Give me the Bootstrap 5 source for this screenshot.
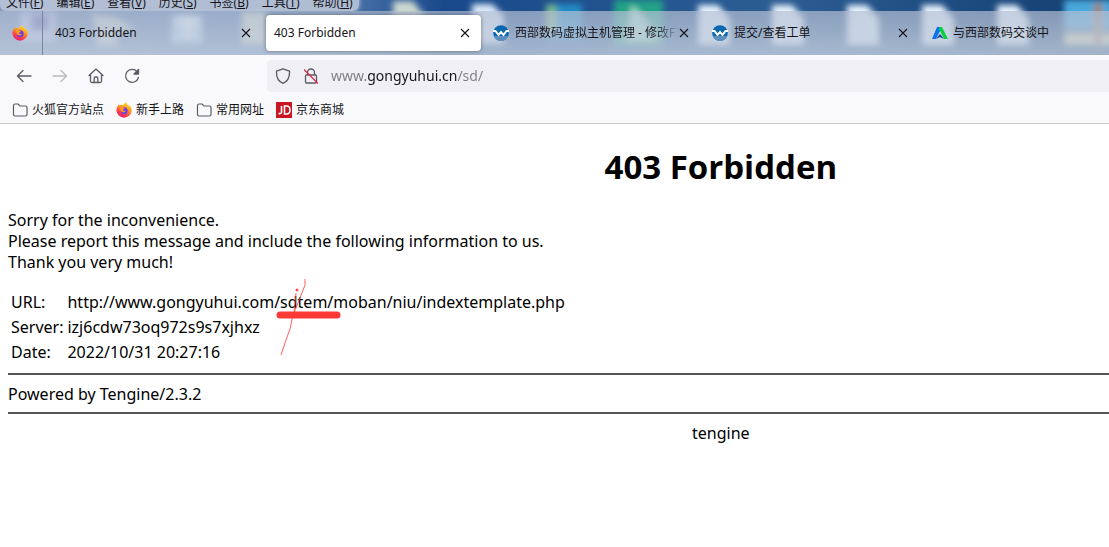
<!DOCTYPE html>
<html lang="zh-CN">
<head>
<meta charset="utf-8">
<meta name="viewport" content="width=device-width, initial-scale=1">
<title>403 Forbidden</title>
<link href="https://cdn.jsdelivr.net/npm/bootstrap@5.3.0/dist/css/bootstrap.min.css" rel="stylesheet">
<style>
body{font-family:"Noto Sans","Noto Sans CJK SC",sans-serif;font-size:16px;line-height:21px;color:#000}
.chrome{font-size:12px;line-height:16px}
.chrome a,.chrome button{color:#15141a;text-decoration:none}
.chrome button{border:0;background:none;padding:0;line-height:16px;flex:none;white-space:nowrap}
.window-top{background:#1c4b88;overflow:hidden}
.wallpaper{position:absolute;inset:0;width:100%;height:100%}
.menubar{height:11px;overflow:hidden}
.menu-glow{background:#bcc6d8e0;border-radius:0 0 6px 6px;gap:13px;padding:0 6px;box-shadow:0 0 5px #bcc6d8}
.tabstrip{height:44px;background:linear-gradient(#b4bfd3b0,#c4cfded0);overflow:hidden}
.pin{width:43px;border-right:1px solid #7785a0;padding-left:12px;flex:none}
.tab-item{width:215px;height:36px;margin:0 2px;padding:0 11px 0 8px;flex:none;border-radius:4px}
.tab-item.current{background:#fff;box-shadow:0 0 4px #0006}
.tab-label{flex:1;overflow:hidden;white-space:nowrap}
.fade-end{-webkit-mask:linear-gradient(90deg,#000 85%,#0000);mask:linear-gradient(90deg,#000 85%,#0000)}
.toolbar{background:#f9f9fb;height:41px;padding-left:16px}
.nav-tools{width:251px;gap:20px;flex:none}
.nav-tools svg,.urlbox svg{display:block;fill:none;stroke:#5b5b66;stroke-width:1.3;stroke-linecap:round;stroke-linejoin:round}
.urlbox{background:#f0f0f4;border-radius:4px 0 0 4px;height:32px;padding-left:8px;gap:12px}
.urlbox input{border:0;outline:0;padding:0;font-size:14px;height:24px;color:transparent;background:linear-gradient(90deg,#7b7b82 36px,#15141a 36px,#15141a 126px,#7b7b82 126px);-webkit-background-clip:text;background-clip:text}
.bookmarks{background:#f9f9fb;height:28px;border-bottom:1px solid #ccc;padding:0 12px;gap:12px}
.bookmarks a{gap:4px;white-space:nowrap}
.error-page{width:130%;padding:21px 8px}
.error-page h1{font-family:"Open Sans",sans-serif;font-size:33px;font-weight:700;line-height:43px;margin:0 0 22px}
.report{border-collapse:separate;border-spacing:2px;margin-top:16px}
.report th,.report td{padding:1px;font-weight:400}
.error-page hr{border:0;height:2px;background:#555;opacity:1;margin:7px 0 9px}
.scribble{position:absolute;left:-4px;top:-13px}
</style>
</head>
<body>
<svg width="0" height="0" class="position-absolute" aria-hidden="true">
 <defs>
  <linearGradient id="flame" x1=".8" y1="0" x2=".3" y2="1"><stop offset="0" stop-color="#fff13a"/><stop offset=".4" stop-color="#ff9a1f"/><stop offset=".75" stop-color="#ff3c46"/><stop offset="1" stop-color="#e9147e"/></linearGradient>
  <symbol id="fox" viewBox="0 0 16 16"><path fill="url(#flame)" d="M9.3 0c1.3.8 2 1.8 2.300 3 1 .2 1.300.600 1.700 1.100l.2-1.100c1.500 1.700 2.400 3.800 2.200 6A7.700 7.700 0 0 1 .4 8.600C.3 6.700 1 5 2 3.800l.1-1.600 1.400 1.400C4.500 3 5.400 3 6.200 3.200 7.700 2.600 8.700 1.600 9.300 0z"/><circle cx="8.200" cy="8.700" r="3.500" fill="#7240e0"/><path fill="#ff9820" d="M3.200 5.300c1.200-.7 2.500-.5 3.400.3l2.300.4c-.2 1-1.500 1-1.800 1.800.2 1.300 1.500 1.500 2.700.9-.8 1.900-3.700 2-4.900.3C4.300 8 4.500 6.500 3.200 5.300z"/></symbol>
  <symbol id="west" viewBox="0 0 16 16"><circle cx="8" cy="8" r="7.800" fill="#0867ae"/><path fill="#5c8ebd" d="M.7 11h14.600A7.800 7.800 0 0 1 .7 11z"/><path d="M0 6h2.500l3 4L8 7l2.500 3 3-4H16" fill="none" stroke="#fff" stroke-width="2"/></symbol>
  <symbol id="cross" viewBox="0 0 10 10"><path d="M1 1l8 8M9 1L1 9" stroke="#15141a" stroke-width="1.100"/></symbol>
  <symbol id="folder" viewBox="0 0 16 16"><path d="M1.500 3.500q0-1.500 1.500-1.500h3l2 2h5.500q1.500 0 1.500 1.500v7q0 1.500-1.500 1.500H3q-1.500 0-1.500-1.500z" fill="none" stroke="#5b5b66" stroke-width="1.200"/></symbol>
 </defs>
</svg>
<header class="chrome">
 <div class="window-top position-relative">
  <svg class="wallpaper" aria-hidden="true">
   <defs><filter id="haze" x="-30%" y="-30%" width="160%" height="160%"><feGaussianBlur stdDeviation="3"/></filter><linearGradient id="sky"><stop offset="0" stop-color="#718db7"/><stop offset=".3" stop-color="#5279ac"/><stop offset=".4" stop-color="#19498b"/><stop offset=".7" stop-color="#2c5d92"/><stop offset="1" stop-color="#123d71"/></linearGradient></defs>
   <rect width="100%" height="100%" fill="url(#sky)"/>
   <g filter="url(#haze)">
    <path fill="#b8c2ee" d="M20 12h36v30H20z"/><path fill="#5867a8" d="M31 15h18v16H31z"/>
    <path fill="#c8d1cf" d="M92 14l26 4 18 12-20 2 2 14H98z"/><path fill="#bde0fb" d="M172 15h30v28h-30z"/><path stroke="#fff" stroke-width="5" d="M178 22h20M188 15v22"/>
    <path fill="#d0d9c8" d="M242 12h24v32h-24z"/><path fill="#cad8cf" d="M393 1h20l14 18v26h-34z"/><path fill="#dceafa" d="M472 4h20l12 12v28h-32z"/>
    <path fill="#208bc3" d="M546 4h36v36h-36z"/><path fill="#7cb98a" d="M546 5h10v28h-10z"/><path fill="#21a287" d="M614 0h49v46h-49z"/><path fill="#a8e5d1" d="M632 5l15 17 10 18h-30z"/>
    <path fill="#e9f4ff" d="M698 5h20l12 14v26h-32zM772 5h20l12 14v26h-32zM847 5h20l12 14v26h-32zM922 5h20l12 14v26h-32zM997 5h20l12 14v26h-32z"/>
    <path fill="#4aa8dc" d="M1064 0h50v30h-50z"/><path fill="#d8d3a0" d="M1064 33h50v12h-50z"/><path fill="#a38163" d="M1094 3h8v44h-8z"/>
   </g>
  </svg>
  <nav class="menubar d-flex align-items-end position-relative" aria-label="菜单">
   <div class="menu-glow d-flex">
    <button type="button">文件(<u>F</u>)</button><button type="button">编辑(<u>E</u>)</button><button type="button">查看(<u>V</u>)</button><button type="button">历史(<u>S</u>)</button><button type="button">书签(<u>B</u>)</button><button type="button">工具(<u>T</u>)</button><button type="button">帮助(<u>H</u>)</button>
   </div>
  </nav>
  <div class="tabstrip d-flex align-items-center position-relative">
   <a href="#" class="pin h-100 d-flex align-items-center me-1" aria-label="Firefox"><svg width="16" height="16"><use href="#fox"/></svg></a>
   <div class="tab-item d-flex align-items-center ms-0"><a href="#" class="tab-label">403 Forbidden</a><button type="button" aria-label="关闭"><svg class="d-block" width="10" height="10"><use href="#cross"/></svg></button></div>
   <div class="tab-item current d-flex align-items-center"><a href="#" class="tab-label">403 Forbidden</a><button type="button" aria-label="关闭"><svg class="d-block" width="10" height="10"><use href="#cross"/></svg></button></div>
   <div class="tab-item d-flex align-items-center"><svg class="me-1 flex-shrink-0" width="18" height="16"><use href="#west" width="16"/></svg><a href="#" class="tab-label fade-end">西部数码虚拟主机管理 - 修改FTP</a><button type="button" aria-label="关闭"><svg class="d-block" width="10" height="10"><use href="#cross"/></svg></button></div>
   <div class="tab-item d-flex align-items-center"><svg class="me-1 flex-shrink-0" width="18" height="16"><use href="#west" width="16"/></svg><a href="#" class="tab-label">提交/查看工单</a><button type="button" aria-label="关闭"><svg class="d-block" width="10" height="10"><use href="#cross"/></svg></button></div>
   <div class="tab-item d-flex align-items-center"><svg class="me-1 flex-shrink-0" width="18" height="16" viewBox="0 0 18 16"><path fill="#0875ed" d="M6 2h5L5 14H1z"/><path fill="#08d13f" d="M8.500 2H11l6 12h-4L8 4z"/><path fill="#173d92" d="M5 14l4-5 4 5-4-2z"/></svg><a href="#" class="tab-label">与西部数码交谈中</a></div>
  </div>
 </div>
 <div class="toolbar d-flex align-items-center">
  <div class="nav-tools d-flex">
   <button type="button" aria-label="后退"><svg width="16" height="16"><path d="M15 8H1.500M7 2.500L1.500 8 7 13.500"/></svg></button>
   <button type="button" aria-label="前进" disabled><svg width="16" height="16" opacity=".4"><path d="M1 8h13.500M9 2.500L14.500 8 9 13.500"/></svg></button>
   <button type="button" aria-label="主页"><svg width="16" height="16"><path d="M1 7.500L8 1l7 6.500M2.500 7v6q0 1.500 1.500 1.500h8q1.500 0 1.500-1.500V7M6.200 14.500V10q0-1 1-1h1.600q1 0 1 1v4.500"/></svg></button>
   <button type="button" aria-label="刷新"><svg width="16" height="16"><path d="M14.400 9.500A6.500 6.500 0 1 1 13 3.500"/><path fill="#5b5b66" d="M14.500 1.500v4.500H10z"/></svg></button>
  </div>
  <div class="urlbox d-flex align-items-center flex-grow-1">
   <svg width="16" height="16"><path d="M8 .8l6.500 2.400C14.800 9 12.500 13.500 8 15.300 3.500 13.500 1.200 9 1.500 3.200z"/></svg>
   <svg width="16" height="16"><path d="M4.500 7V4.500a3.500 3.500 0 0 1 7 0V7M3.500 7h9q1 0 1 1v6q0 1-1 1h-9q-1 0-1-1V8q0-1 1-1z"/><path stroke="#e22850" d="M1.500 2l13 13"/></svg>
   <input class="flex-grow-1" type="text" aria-label="网址" value="www.gongyuhui.cn/sd/">
  </div>
 </div>
 <nav class="bookmarks d-flex align-items-center" aria-label="书签">
  <a href="#" class="d-flex"><svg width="16" height="16"><use href="#folder"/></svg>火狐官方站点</a>
  <a href="#" class="d-flex"><svg width="16" height="16"><use href="#fox"/></svg>新手上路</a>
  <a href="#" class="d-flex"><svg width="16" height="16"><use href="#folder"/></svg>常用网址</a>
  <a href="#" class="d-flex"><svg width="16" height="16"><path fill="#c91623" d="M0 0h16v16H0z"/><path d="M5.500 4v6q0 2-3 1.500M8.500 4v8h2q3.500 0 3.500-4t-3.500-4z" fill="none" stroke="#fff" stroke-width="1.600"/></svg>京东商城</a>
 </nav>
</header>
<div class="overflow-hidden">
<main class="error-page">
 <h1 class="text-center">403 Forbidden</h1>
 <div>Sorry for the inconvenience.<br>Please report this message and include the following information to us.<br>Thank you very much!</div>
 <table class="report">
  <tr><th scope="row">URL:</th><td>http://www.gongyuhui.com/<span class="position-relative">sdtem/<svg class="scribble" width="68" height="80" fill="none" stroke="#fd3a36" aria-hidden="true"><path d="M4 37h57" stroke-width="7" stroke-linecap="round"/><path d="M29 1v6l-7 18-5 12-3 14-4 11-5 15M20 15l-2 20" stroke-opacity=".8"/><circle cx="21" cy="12" r="1" fill="#fd3a36"/></svg></span>moban/niu/indextemplate.php</td></tr>
  <tr><th scope="row">Server:</th><td>izj6cdw73oq972s9s7xjhxz</td></tr>
  <tr><th scope="row">Date:</th><td>2022/10/31 20:27:16</td></tr>
 </table>
 <hr>
 <div>Powered by Tengine/2.3.2</div>
 <hr>
 <div class="text-center">tengine</div>
</main>
</div>
<script src="https://cdn.jsdelivr.net/npm/bootstrap@5.3.0/dist/js/bootstrap.bundle.min.js"></script>
</body>
</html>
